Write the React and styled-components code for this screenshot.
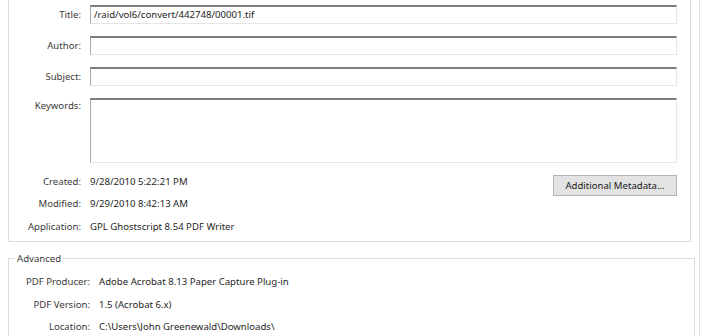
import styled, { createGlobalStyle } from "styled-components";

const GlobalStyle = createGlobalStyle`
  html, body {
    margin: 0;
    background: #ffffff;
  }
  body {
    font-family: "Noto Sans", "Open Sans", sans-serif;
    font-size: 9.6px;
    color: #2b2b2b;
  }
`;

const docFields = [
  { label: "Title:", value: "/raid/vol6/convert/442748/00001.tif" },
  { label: "Author:", value: "" },
  { label: "Subject:", value: "" },
  { label: "Keywords:", value: "", tall: true },
];

const dates = [
  { label: "Created:", value: "9/28/2010 5:22:21 PM" },
  { label: "Modified:", value: "9/29/2010 8:42:13 AM" },
  { label: "Application:", value: "GPL Ghostscript 8.54 PDF Writer" },
];

const advanced = [
  { label: "PDF Producer:", value: "Adobe Acrobat 8.13 Paper Capture Plug-in" },
  { label: "PDF Version:", value: "1.5 (Acrobat 6.x)" },
  { label: "Location:", value: "C:\\Users\\John Greenewald\\Downloads\\" },
];

export default function App() {
  return (
    <>
      <GlobalStyle />
      <Page>
        <Frame>
          <DescriptionBox>
            <FieldGrid>
              {docFields.map((f) => (
                <FieldRow key={f.label}>
                  <Label $top={f.tall}>{f.label}</Label>
                  <TextField $tall={f.tall}>{f.value}</TextField>
                </FieldRow>
              ))}
            </FieldGrid>
            <InfoGrid>
              {dates.map((d, i) => (
                <InfoRow key={d.label}>
                  <Label>{d.label}</Label>
                  <Value>{d.value}</Value>
                  {i === 0 && <Button>Additional Metadata...</Button>}
                </InfoRow>
              ))}
            </InfoGrid>
          </DescriptionBox>

          <AdvancedBox>
            <Legend>Advanced</Legend>
            <AdvancedGrid>
              {advanced.map((a) => (
                <InfoRow key={a.label}>
                  <Label>{a.label}</Label>
                  <Value>{a.value}</Value>
                </InfoRow>
              ))}
            </AdvancedGrid>
          </AdvancedBox>
        </Frame>
      </Page>
    </>
  );
}

const Page = styled.div`
  width: 702px;
  height: 336px;
  overflow: hidden;
  box-sizing: border-box;
  padding-left: 8px;
  padding-right: 2px;
`;

const Frame = styled.div`
  height: 100%;
  border-right: 1px solid #e2e2e2;
  display: flex;
  flex-direction: column;
`;

const DescriptionBox = styled.div`
  border: 1px solid #dcdcdc;
  border-top: none;
  margin-right: 8px;
  padding: 5px 13px 3px 0;
`;

const FieldGrid = styled.div`
  display: grid;
  grid-template-columns: 72px 1fr;
  row-gap: 12px;
  column-gap: 9px;
`;

const FieldRow = styled.div`
  display: contents;
`;

const Label = styled.div`
  grid-column: 1;
  text-align: right;
  color: #3a3a3a;
  white-space: nowrap;
  align-self: ${(p) => (p.$top ? "start" : "center")};
  padding-top: ${(p) => (p.$top ? "1px" : "0")};
`;

const TextField = styled.div`
  grid-column: 2;
  height: ${(p) => (p.$tall ? "62px" : "16px")};
  box-sizing: content-box;
  border-top: 2px solid #7d7d7d;
  border-left: 1px solid #a8a8a8;
  border-right: 1px solid #e6e6e6;
  border-bottom: 1px solid #e6e6e6;
  padding: 0 3px;
  line-height: 15px;
  color: #222;
  background: #fff;
`;

const InfoGrid = styled.div`
  display: grid;
  grid-template-columns: 72px 1fr auto;
  grid-auto-rows: 22.5px;
  column-gap: 9px;
  margin-top: 7px;
`;

const InfoRow = styled.div`
  display: contents;
`;

const Value = styled.div`
  grid-column: 2;
  align-self: center;
  color: #262626;
  white-space: nowrap;
`;

const Button = styled.div`
  grid-column: 3;
  align-self: start;
  margin-top: 5px;
  width: 122px;
  height: 19px;
  border: 1px solid #b4b4b4;
  background: #e3e3e3;
  color: #202020;
  display: flex;
  align-items: center;
  justify-content: center;
  white-space: nowrap;
`;

const AdvancedBox = styled.fieldset`
  margin: 10px 4px 0 0;
  padding: 0 0 0 6px;
  border: 1px solid #dcdcdc;
  flex: 1;
  min-width: 0;
`;

const Legend = styled.legend`
  padding: 0 2px;
  color: #3a3a3a;
  font-size: 9.6px;
`;

const AdvancedGrid = styled.div`
  display: grid;
  grid-template-columns: 75px 1fr;
  grid-auto-rows: 22.5px;
  column-gap: 9px;
  margin-top: 6px;
`;
